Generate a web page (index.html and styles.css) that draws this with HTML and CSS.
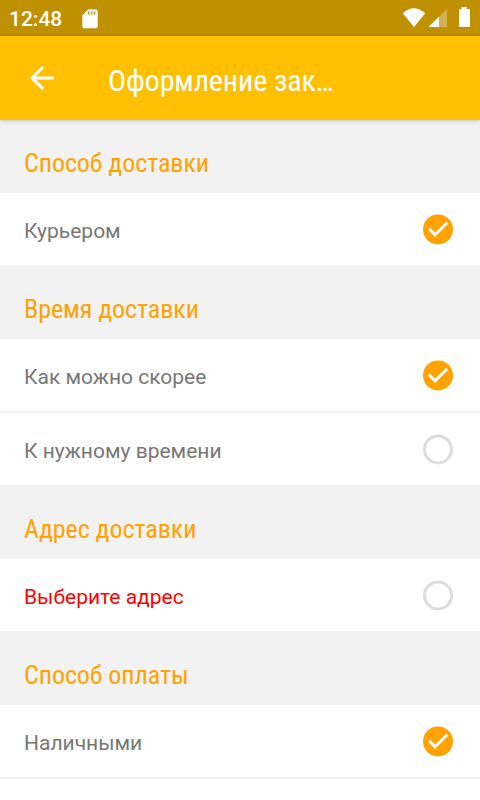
FILE: index.html
```html
<!DOCTYPE html>
<html lang="ru">
  <head>
    <meta charset="UTF-8" />
    <meta name="viewport" content="width=device-width, initial-scale=1.0" />
    <title>Оформление заказа</title>
    <link rel="stylesheet" href="styles.css">
  </head>
  <body>
    <div class="status-bar">
      <span class="clock">12:48</span>
      <svg class="sd-card" width="16" height="20" viewBox="0 0 16 20">
        <path fill="#fff" d="M6 0.500h8a1.700 1.700 0 0 1 1.700 1.700v15.300a1.700 1.700 0 0 1-1.700 1.700H2a1.700 1.700 0 0 1-1.700-1.700V6.200z" />
        <path fill="#bf9002" fill-opacity="0.8" d="M5.800 2.300h1.800v3.500H5.800zM8.700 2.300h1.800v3.500H8.700zM11.600 2.300h1.800v3.500h-1.800z" />
      </svg>
      <svg class="status-icons" width="70" height="22" viewBox="0 0 70 22">
        <!-- Wi-Fi -->
        <path fill="#fff" d="M0.800 6.200Q11.700-3.500 23.200 6.200L12 20z" />
        <!-- Signal -->
        <path fill="#fff" fill-opacity="0.3" d="M45 2v18H27z" />
        <path fill="#fff" d="M37 9.500V20H26.500z" />
        <!-- Battery -->
        <path fill="#fff" d="M59.600 0h5v2H67a1 1 0 0 1 1 1v16a1 1 0 0 1-1 1h-9a1 1 0 0 1-1-1V3a1 1 0 0 1 1-1h1.600z" />
      </svg>
    </div>

    <header class="toolbar">
      <svg class="back" width="36" height="36" viewBox="0 0 24 24">
        <path fill="#fff" d="M20 11H7.830l5.590-5.590L12 4l-8 8 8 8 1.410-1.410L7.830 13H20v-2z" />
      </svg>
      <h1 class="title">Оформление зак…</h1>
    </header>

    <main class="content">
      <h2 class="section-title first">Способ доставки</h2>
      <div class="options">
        <div class="option">
          <span>Курьером</span>
          <svg class="check" viewBox="0 -1.4 30 32">
            <circle cx="15" cy="15" r="15" />
            <path d="M6 14.400l6 6L24.200 8.400" />
          </svg>
        </div>
      </div>

      <h2 class="section-title">Время доставки</h2>
      <div class="options">
        <div class="option">
          <span>Как можно скорее</span>
          <svg class="check" viewBox="0 -1.4 30 32">
            <circle cx="15" cy="15" r="15" />
            <path d="M6 14.400l6 6L24.200 8.400" />
          </svg>
        </div>
        <div class="option">
          <span>К нужному времени</span>
          <svg class="check empty" viewBox="0 -1.4 30 32">
            <circle cx="15" cy="15" r="13.5" />
          </svg>
        </div>
      </div>

      <h2 class="section-title">Адрес доставки</h2>
      <div class="options">
        <div class="option error">
          <span>Выберите адрес</span>
          <svg class="check empty" viewBox="0 -1.4 30 32">
            <circle cx="15" cy="15" r="13.5" />
          </svg>
        </div>
      </div>

      <h2 class="section-title">Способ оплаты</h2>
      <div class="options">
        <div class="option">
          <span>Наличными</span>
          <svg class="check" viewBox="0 -1.4 30 32">
            <circle cx="15" cy="15" r="15" />
            <path d="M6 14.400l6 6L24.200 8.400" />
          </svg>
        </div>
        <div class="option"></div>
      </div>
    </main>
  </body>
</html>
```

FILE: styles.css
```css
html,
body {
  margin: 0;
  padding: 0;
  height: 100%;
}

body {
  display: flex;
  flex-direction: column;
  overflow: hidden;
  background: #f2f2f2;
  font-family: Roboto, sans-serif;
}

/* Status bar */
.status-bar {
  display: flex;
  flex: none;
  align-items: flex-start;
  box-sizing: border-box;
  height: 36px;
  padding: 0 8px 0 9px;
  background: linear-gradient(#bf9002 33px, #b48703);
  color: #fff;
}

.status-bar .clock {
  width: 73px;
  font-size: 21px;
  font-weight: 500;
  line-height: 38px;
}

.status-bar .sd-card {
  margin-top: 8.500px;
}

.status-bar .status-icons {
  margin: 7px 0 0 auto;
}

/* Toolbar */
.toolbar {
  z-index: 1;
  display: flex;
  flex: none;
  align-items: center;
  height: 84px;
  padding-left: 24px;
  background: #ffc003;
  box-shadow: 0 1px 4px rgba(0, 0, 0, 0.2);
  color: #fff;
}

.toolbar .title {
  margin: 6px 0 0 48px;
  font-family: "Roboto Condensed", Roboto, sans-serif;
  font-size: 30px;
  font-stretch: 75%;
  font-weight: 400;
  letter-spacing: -0.1px;
  line-height: 40px;
  white-space: nowrap;
}

/* Sections */
.content {
  flex: 1;
  overflow: hidden;
}

.section-title {
  box-sizing: border-box;
  height: 74px;
  margin: 0;
  padding: 28px 24px 0;
  color: #ffa202;
  font-family: "Roboto Condensed", Roboto, sans-serif;
  font-size: 26px;
  font-stretch: 75%;
  font-weight: 400;
  letter-spacing: -0.05px;
  line-height: 32px;
}

.section-title.first {
  height: 73px;
  padding-top: 27px;
}

.options {
  display: flex;
  flex-direction: column;
  gap: 2px;
}

.option {
  display: flex;
  align-items: center;
  justify-content: space-between;
  height: 72px;
  padding: 0 27px 0 24px;
  background: #fff;
  color: #777;
  font-size: 21px;
}

.option span {
  padding-top: 4px;
}

.option.error {
  color: #f00;
}

/* Option marker, filled when chosen */
.check {
  width: 30px;
  height: 32px;
}

.check circle {
  fill: #ffa202;
}

.check path {
  fill: none;
  stroke: #fff;
  stroke-width: 3;
}

.check.empty circle {
  fill: none;
  stroke: #ddd;
  stroke-width: 3;
}
```
